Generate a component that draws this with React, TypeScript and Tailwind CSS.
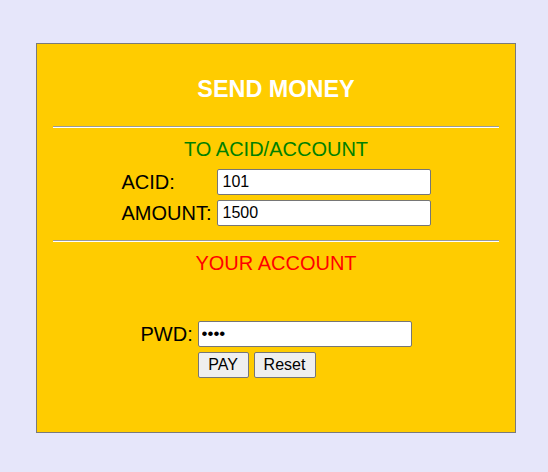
export default function App() {
  return (
    <div className="min-h-[472px] w-[548px] bg-[#e6e6fa] pt-[43px] font-['Liberation_Sans',Arial,sans-serif] text-[20px] text-black">
      {/* Send money card */}
      <div className="ml-[36px] h-[390px] w-[480px] border border-[#7a7a7a] bg-[#ffcc00]">
        <h3 className="pt-[32px] text-center text-[23.4px] font-bold leading-[27px] text-white">SEND MONEY</h3>
        <hr className="mx-[16px] mt-[23px] border-t border-b border-t-[#9a9a9a] border-b-white" />

        <div className="mt-[10px] text-center leading-[23px] text-[#008000]">TO ACID/ACCOUNT</div>
        <div className="mx-auto mt-[8px] grid w-[309px] grid-cols-[92px_214px] items-center gap-x-[3px] gap-y-[5px]">
          <label className="leading-[23px]">ACID:</label>
          <input
            className="h-[26px] rounded-[2px] border border-[#767676] bg-white px-[5px] text-[16px] outline-none"
            defaultValue="101"
          />
          <label className="leading-[23px]">AMOUNT:</label>
          <input
            className="h-[26px] rounded-[2px] border border-[#767676] bg-white px-[5px] text-[16px] outline-none"
            defaultValue="1500"
          />
        </div>
        <hr className="mx-[16px] mt-[14px] border-t border-b border-t-[#9a9a9a] border-b-white" />

        <div className="mt-[10px] text-center leading-[23px] text-[#ff0000]">YOUR ACCOUNT</div>
        <div className="mx-auto mt-[46px] grid w-[271px] grid-cols-[52px_214px] items-center gap-x-[5px] gap-y-[5px]">
          <label className="leading-[23px]">PWD:</label>
          <input
            type="password"
            className="h-[26px] rounded-[2px] border border-[#767676] bg-white px-[3px] text-[17px] outline-none"
            defaultValue="1234"
          />
          <div />
          <div className="flex gap-[5px]">
            <button className="h-[26px] w-[51px] rounded-[2px] border border-[#767676] bg-[#efefef] text-[16px] leading-none">PAY</button>
            <button className="h-[26px] w-[62px] rounded-[2px] border border-[#767676] bg-[#efefef] text-[16px] leading-none">Reset</button>
          </div>
        </div>
      </div>
    </div>
  );
}
